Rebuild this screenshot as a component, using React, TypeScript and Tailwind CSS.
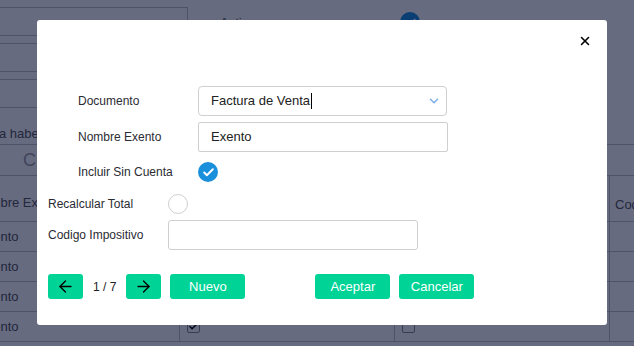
import { ArrowLeft, ArrowRight, Check, ChevronDown, X } from "lucide-react"

const filas = [
  { exento: "Exento", incluir: false, recalcular: false },
  { exento: "Exento", incluir: false, recalcular: false },
  { exento: "Exento", incluir: false, recalcular: false },
  { exento: "Exento", incluir: true, recalcular: false },
]

function Casilla({ checked }: { checked: boolean }) {
  return (
    <span className="flex h-[13px] w-[13px] items-center justify-center rounded-[2px] border border-[#8a8a8a] bg-white">
      {checked && <Check size={11} strokeWidth={3} className="text-black" />}
    </span>
  )
}

export default function App() {
  return (
    <div className="relative h-[346px] w-[634px] overflow-hidden bg-white font-['Liberation_Sans',Arial,sans-serif] text-[13px] text-[#555]">
      {/* Pagina de fondo */}
      <div className="flex">
        <div className="flex w-[188px] flex-col gap-[7px] pt-[7px]">
          <div className="h-[29px] border border-l-0 border-[#c4c4c4]" />
          <div className="h-[29px] border border-l-0 border-[#c4c4c4]" />
          <div className="h-[29px] border border-l-0 border-[#c4c4c4]" />
          <div className="flex h-[29px] items-end whitespace-nowrap">
            <span className="ml-[-1px] pb-[1px]">a haber</span>
          </div>
        </div>
        <div className="flex items-start pt-[12px]">
          <span className="ml-[32px] mt-px w-[180px]">Activo</span>
          <span className="flex h-[20px] w-[20px] items-center justify-center rounded-full bg-[#1a8fdb]">
            <Check size={13} strokeWidth={3} className="text-white" />
          </span>
        </div>
      </div>

      <div className="flex h-[32px] items-center border-y border-[#c4c4c4] pl-[23px] text-[18px] text-[#a0a0a0]">
        Cuentas
      </div>

      <div className="grid grid-cols-[179px_215px_215px_1fr]">
        <div className="flex h-[46px] items-end overflow-hidden whitespace-nowrap border-b border-[#c4c4c4] pb-[9px]">
          <span className="ml-[-27px]">Nombre Exento</span>
        </div>
        <div className="h-[46px] border-b border-l border-[#c4c4c4]" />
        <div className="h-[46px] border-b border-l border-[#c4c4c4]" />
        <div className="flex h-[46px] items-end overflow-hidden whitespace-nowrap border-b border-l border-[#c4c4c4] pb-[7px] pl-[5px]">
          Codigo
        </div>
        {filas.map((fila, i) => (
          <div key={i} className="contents">
            <div className="flex h-[30px] items-center overflow-hidden whitespace-nowrap border-b border-[#c4c4c4]">
              <span className="ml-[-22px]">{fila.exento}</span>
            </div>
            <div className="flex h-[30px] items-center border-b border-l border-[#c4c4c4] pl-[7px]">
              <Casilla checked={fila.incluir} />
            </div>
            <div className="flex h-[30px] items-center border-b border-l border-[#c4c4c4] pl-[7px]">
              <Casilla checked={fila.recalcular} />
            </div>
            <div className="h-[30px] border-b border-l border-[#c4c4c4]" />
          </div>
        ))}
      </div>

      {/* Fondo oscurecido */}
      <div className="absolute inset-0 bg-[rgba(2,8,43,0.6)]" />

      {/* Modal */}
      <div className="absolute left-[37px] top-[20px] flex h-[305px] w-[570px] flex-col rounded-[3px] bg-white text-[12px] text-[#2b2b33]">
        <div className="flex h-[66px] justify-end pr-[15px] pt-[14px]">
          <button className="h-[14px] w-[14px] text-black" aria-label="Cerrar">
            <X size={14} strokeWidth={2.6} />
          </button>
        </div>

        <div className="flex flex-col pl-[11px]">
          <div className="flex h-[30px] items-center pl-[30px]">
            <span className="w-[120px]">Documento</span>
            <div className="flex h-[30px] w-[249px] items-center justify-between rounded-[4px] border border-[#cfcfcf] pl-[12px] pr-[5px] text-[13px] text-[#222]">
              <span className="flex items-center">
                Factura de Venta
                <span className="ml-px h-[16px] w-px bg-black" />
              </span>
              <ChevronDown size={14} strokeWidth={2.6} className="text-[#7db0e6]" />
            </div>
          </div>

          <div className="mt-[6px] flex h-[30px] items-center pl-[30px]">
            <span className="w-[120px]">Nombre Exento</span>
            <div className="flex h-[30px] w-[250px] items-center rounded-[2px] border border-[#cfcfcf] pl-[12px] text-[13px] text-[#222]">
              Exento
            </div>
          </div>

          <div className="mt-[5px] flex h-[30px] items-center pl-[30px]">
            <span className="w-[120px]">Incluir Sin Cuenta</span>
            <span className="flex h-[20px] w-[20px] items-center justify-center rounded-full bg-[#1a8fdb]">
              <Check size={13} strokeWidth={3.5} className="text-white" />
            </span>
          </div>

          <div className="mt-[2px] flex h-[30px] items-center">
            <span className="w-[120px]">Recalcular Total</span>
            <span className="h-[20px] w-[20px] rounded-full border border-[#cfcfcf]" />
          </div>

          <div className="mt-px flex h-[30px] items-center">
            <span className="w-[120px]">Codigo Impositivo</span>
            <div className="h-[30px] w-[250px] rounded-[3px] border border-[#cfcfcf]" />
          </div>

          <div className="mt-[24px] flex h-[25px] items-center text-[13px]">
            <button className="flex h-[25px] w-[35px] items-center justify-center rounded-[3px] bg-[#00d396] text-black">
              <ArrowLeft size={19} strokeWidth={1.6} />
            </button>
            <span className="ml-[10px] whitespace-nowrap text-[12px] text-[#222]">1 / 7</span>
            <button className="ml-[10px] flex h-[25px] w-[35px] items-center justify-center rounded-[3px] bg-[#00d396] text-black">
              <ArrowRight size={19} strokeWidth={1.6} />
            </button>
            <button className="ml-[9px] h-[25px] w-[75px] rounded-[3px] bg-[#00d396] text-white">Nuevo</button>
            <button className="ml-[70px] h-[25px] w-[75px] rounded-[3px] bg-[#00d396] text-white">Aceptar</button>
            <button className="ml-[9px] h-[25px] w-[75px] rounded-[3px] bg-[#00d396] text-white">Cancelar</button>
          </div>
        </div>
      </div>
    </div>
  )
}
